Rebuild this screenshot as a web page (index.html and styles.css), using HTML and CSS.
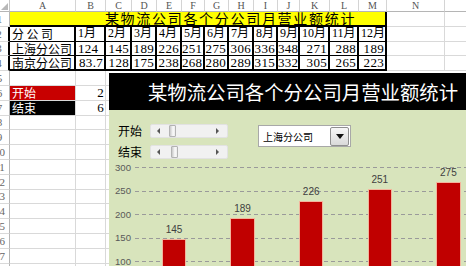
FILE: index.html
```html
<!DOCTYPE html>
<html>
<head>
<meta charset="utf-8">
<link rel="stylesheet" href="styles.css">
</head>
<body>
<div class="page">
  <div class="sheet">
    <div class="corner"><span class="tri"></span></div>
    <div class="ch">A</div><div class="ch">B</div><div class="ch">C</div><div class="ch">D</div><div class="ch">E</div><div class="ch">F</div><div class="ch">G</div><div class="ch">H</div><div class="ch">I</div><div class="ch">J</div><div class="ch">K</div><div class="ch">L</div><div class="ch">M</div><div class="ch">N</div><div class="ch">O</div>

    <div class="rh">1</div>
    <div class="title-cell">某物流公司各个分公司月营业额统计</div>
    <div class="c"></div><div class="c"></div>

    <div class="rh rh-b">2</div>
    <div class="c t lbl spaced">分公司</div>
    <div class="c t hd">1月</div><div class="c t hd">2月</div><div class="c t hd">3月</div><div class="c t hd">4月</div><div class="c t hd">5月</div><div class="c t hd">6月</div><div class="c t hd">7月</div><div class="c t hd">8月</div><div class="c t hd">9月</div><div class="c t hd">10月</div><div class="c t hd">11月</div><div class="c t hd">12月</div>
    <div class="c"></div><div class="c"></div>

    <div class="rh rh-b">3</div>
    <div class="c t lbl">上海分公司</div>
    <div class="c t num l">124</div><div class="c t num">145</div><div class="c t num">189</div><div class="c t num">226</div><div class="c t num">251</div><div class="c t num">275</div><div class="c t num">306</div><div class="c t num">336</div><div class="c t num">348</div><div class="c t num">271</div><div class="c t num">288</div><div class="c t num">189</div>
    <div class="c"></div><div class="c"></div>

    <div class="rh rh-b">4</div>
    <div class="c t b lbl">南京分公司</div>
    <div class="c t b num">83.7</div><div class="c t b num">128</div><div class="c t b num">175</div><div class="c t b num">238</div><div class="c t b num">268</div><div class="c t b num">280</div><div class="c t b num">289</div><div class="c t b num">315</div><div class="c t b num">332</div><div class="c t b num">305</div><div class="c t b num">265</div><div class="c t b num">223</div>
    <div class="c"></div><div class="c"></div>

    <div class="rh">5</div><div class="c"></div><div class="c"></div><div class="c fill"></div>
    <div class="rh">6</div><div class="c lbl red">开始</div><div class="c num">2</div><div class="c fill"></div>
    <div class="rh">7</div><div class="c lbl black">结束</div><div class="c num">6</div><div class="c fill"></div>
    <div class="rh">8</div><div class="c"></div><div class="c"></div><div class="c fill"></div>
    <div class="rh">9</div><div class="c"></div><div class="c"></div><div class="c fill"></div>
    <div class="rh">10</div><div class="c"></div><div class="c"></div><div class="c fill"></div>
    <div class="rh">11</div><div class="c"></div><div class="c"></div><div class="c fill"></div>
    <div class="rh">12</div><div class="c"></div><div class="c"></div><div class="c fill"></div>
    <div class="rh">13</div><div class="c"></div><div class="c"></div><div class="c fill"></div>
    <div class="rh">14</div><div class="c"></div><div class="c"></div><div class="c fill"></div>
    <div class="rh">15</div><div class="c"></div><div class="c"></div><div class="c fill"></div>
    <div class="rh">16</div><div class="c"></div><div class="c"></div><div class="c fill"></div>
    <div class="rh">17</div><div class="c"></div><div class="c"></div><div class="c fill"></div>
    <div class="rh">18</div><div class="c"></div><div class="c"></div><div class="c fill"></div>
  </div>

  <div class="chart">
    <div class="chart-title">某物流公司各个分公司月营业额统计</div>
    <div class="chart-body">
      <div class="controls">
        <div class="sliders">
          <div class="srow">
            <span class="slabel">开始</span>
            <div class="scroll"><span class="arr arr-l"></span><span class="thumb" style="left:18px"></span><span class="arr arr-r"></span></div>
          </div>
          <div class="srow">
            <span class="slabel">结束</span>
            <div class="scroll"><span class="arr arr-l"></span><span class="thumb" style="left:20px"></span><span class="arr arr-r"></span></div>
          </div>
        </div>
        <div class="combo">
          <div class="combo-text">上海分公司</div>
          <div class="combo-btn"><span class="down"></span></div>
        </div>
      </div>
      <div class="plot">
        <div class="gl"><span class="tick">300</span><span class="line"></span></div>
        <div class="gl"><span class="tick">250</span><span class="line"></span></div>
        <div class="gl"><span class="tick">200</span><span class="line"></span></div>
        <div class="gl"><span class="tick">150</span><span class="line"></span></div>
        <div class="gl"><span class="tick">100</span><span class="line"></span></div>
        <div class="gl"><span class="tick">50</span><span class="line"></span></div>
        <div class="gl gl-0"><span class="tick">0</span><span class="line"></span></div>
        <div class="bars">
          <div class="slot"><span class="val">145</span><div class="bar" style="height:68.2px"></div></div>
          <div class="slot"><span class="val">189</span><div class="bar" style="height:88.8px"></div></div>
          <div class="slot"><span class="val">226</span><div class="bar" style="height:106.2px"></div></div>
          <div class="slot"><span class="val">251</span><div class="bar" style="height:118px"></div></div>
          <div class="slot"><span class="val">275</span><div class="bar" style="height:129.3px"></div></div>
        </div>
      </div>
    </div>
  </div>
</div>
</body>
</html>
```

FILE: styles.css
```css
* { box-sizing: border-box; }
html, body { margin: 0; padding: 0; background: #fff; }
.page {
  position: relative;
  width: 466px;
  height: 266px;
  overflow: hidden;
  font-family: "Liberation Serif", "Noto Sans CJK SC", serif;
}
.sheet {
  display: grid;
  margin-left: -10px;
  grid-template-columns: 20px 66px 30px 26px 25px 25px 23px 24px 25px 24px 22px 30px 29px 28px 58px 60px;
  grid-template-rows: 12px repeat(18, 14.8px);
  width: 515px;
}
.corner {
  display: flex;
  justify-content: flex-end;
  align-items: flex-end;
  padding: 0 1px 1px 0;
  border-right: 1px solid #c6c6c6;
  border-bottom: 1px solid #b5b5b5;
}
.tri {
  width: 0; height: 0;
  border-left: 7px solid transparent;
  border-bottom: 7px solid #b8b8b8;
}
.ch {
  font-size: 10px;
  line-height: 11px;
  color: #555;
  text-align: center;
  border-right: 1px solid #d4d4d4;
  border-bottom: 1px solid #b5b5b5;
}
.rh {
  display: flex;
  justify-content: center;
  align-items: center;
  font-size: 11px;
  color: #666;
  border-right: 1px solid #b5b5b5;
  border-bottom: 1px solid #d9d9d9;
  overflow: hidden;
}
.rh-b { border-right: 2px solid #000; }
.c {
  border-right: 1px solid #d9d9d9;
  border-bottom: 1px solid #d9d9d9;
  overflow: hidden;
  white-space: nowrap;
  font-size: 13px;
  line-height: 13.8px;
  color: #000;
}
.title-cell {
  grid-column: 2 / 15;
  background: #ffff00;
  border-right: 2px solid #000;
  border-bottom: 2px solid #000;
  font-family: "Noto Sans CJK SC", sans-serif;
  font-size: 14px;
  letter-spacing: 1.7px;
  line-height: 12.8px;
  text-align: center;
  padding-left: 66px;
  white-space: nowrap;
  overflow: hidden;
}
.t { border-right: 2px solid #000; border-bottom: 1px solid #000; }
.t.b { border-bottom: 2px solid #000; }
.lbl {
  font-family: "Noto Sans CJK SC", sans-serif;
  font-size: 12px;
  padding-left: 2px;
}
.spaced { letter-spacing: 2.5px; }
.hd {
  font-size: 12px;
  padding-left: 2px;
}
.num { text-align: right; padding-right: 1px; letter-spacing: 0.3px; }
.num.l { text-align: left; padding-left: 2px; }
.fill { grid-column: 4 / -1; }
.red { background: #c80000; color: #fff; }
.black { background: #000; color: #fff; }

/* chart */
.chart {
  position: absolute;
  left: 109px;
  top: 73px;
  width: 388px;
  height: 300px;
  display: flex;
  flex-direction: column;
  font-family: "Noto Sans CJK SC", sans-serif;
}
.chart-title {
  height: 37px;
  flex: none;
  background: #000;
  color: #fff;
  font-size: 19.4px;
  display: flex;
  align-items: center;
  justify-content: center;
  white-space: nowrap;
}
.chart-body {
  flex: 1;
  background: #d8e4bc;
  padding-top: 14px;
}
.controls {
  display: flex;
  align-items: flex-start;
  padding-left: 9px;
  height: 35px;
}
.sliders {
  display: flex;
  flex-direction: column;
  gap: 7px;
}
.srow {
  display: flex;
  align-items: center;
  height: 14px;
}
.slabel {
  width: 32px;
  font-size: 12px;
  line-height: 14px;
  color: #000;
}
.scroll {
  position: relative;
  width: 78px;
  height: 14px;
  background: #f1f1f1;
  border: 1px solid #e2e2e2;
  border-radius: 2px;
  display: flex;
  align-items: center;
  justify-content: space-between;
  padding: 0 8px 0 6px;
}
.arr { width: 0; height: 0; border-top: 3px solid transparent; border-bottom: 3px solid transparent; }
.arr-l { border-right: 3px solid #555; }
.arr-r { border-left: 3px solid #555; }
.thumb {
  position: absolute;
  top: 0;
  width: 7px;
  height: 12px;
  background: linear-gradient(to right, #c9c9c9, #fafafa 60%, #ececec);
  border: 1px solid #b3b3b3;
  border-radius: 1px;
}
.combo {
  margin-left: 30px;
  margin-top: 1px;
  width: 93px;
  height: 22px;
  background: #fff;
  border: 1px solid #a8a8a8;
  display: flex;
  align-items: center;
  justify-content: space-between;
  padding-left: 4px;
  padding-right: 1px;
}
.combo-text { font-size: 10px; color: #000; white-space: nowrap; }
.combo-btn {
  width: 19px;
  height: 19px;
  background: linear-gradient(#f7f7f7, #d9d9d9);
  border: 1px solid #8f8f8f;
  border-radius: 2px;
  display: flex;
  align-items: center;
  justify-content: center;
}
.down {
  width: 0; height: 0;
  border-left: 4px solid transparent;
  border-right: 4px solid transparent;
  border-top: 5px solid #111;
}
.plot {
  position: relative;
  margin-top: 8px;
  height: 141px;
}
.gl {
  display: flex;
  align-items: flex-start;
  height: 23.5px;
}
.gl-0 { height: 0; }
.tick {
  width: 22px;
  flex: none;
  text-align: right;
  font-family: "Liberation Sans", Arial, sans-serif;
  font-size: 9.6px;
  line-height: 11px;
  margin-top: -5.5px;
  color: #595959;
}
.line {
  flex: 1;
  height: 1px;
  margin-left: 4px;
  background: repeating-linear-gradient(to right, #9a9a9a 0 4px, transparent 4px 7px);
}
.bars {
  position: absolute;
  left: 30.7px;
  top: 0;
  height: 141px;
  display: flex;
  align-items: stretch;
}
.slot {
  width: 68.6px;
  display: flex;
  flex-direction: column;
  align-items: center;
  justify-content: flex-end;
}
.val {
  font-family: "Liberation Sans", Arial, sans-serif;
  font-size: 10px;
  line-height: 11px;
  margin-bottom: 5px;
  color: #404040;
}
.bar {
  width: 22.5px;
  background: #c00000;
  box-shadow: 0 0 0 1px #f3b49c;
}
```
